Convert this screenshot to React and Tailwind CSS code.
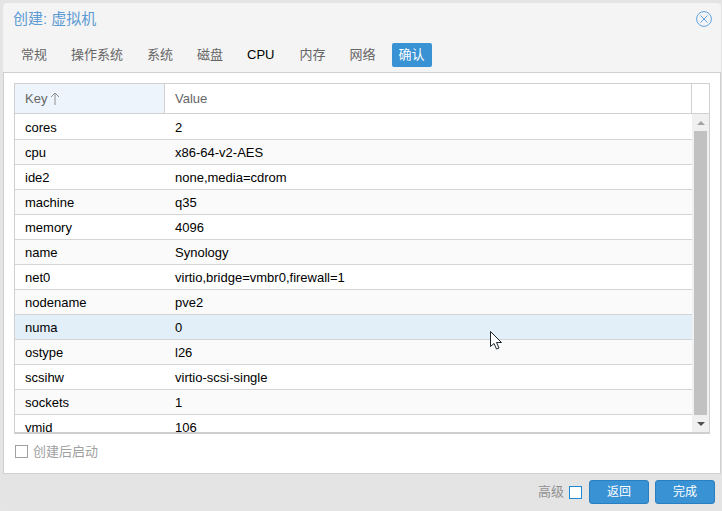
const rows = [
  ["cores", "2"],
  ["cpu", "x86-64-v2-AES"],
  ["ide2", "none,media=cdrom"],
  ["machine", "q35"],
  ["memory", "4096"],
  ["name", "Synology"],
  ["net0", "virtio,bridge=vmbr0,firewall=1"],
  ["nodename", "pve2"],
  ["numa", "0"],
  ["ostype", "l26"],
  ["scsihw", "virtio-scsi-single"],
  ["sockets", "1"],
  ["vmid", "106"],
];

const tabs = ["常规", "操作系统", "系统", "磁盘", "CPU", "内存", "网络"];

const Row = ({ row, index }) => {
  const bg = index === 8 ? "bg-[#e2eef8]" : index % 2 === 1 ? "bg-[#fafafa]" : "bg-white";
  return (
    <div className={`flex h-[25px] shrink-0 border-b border-[#d4d4d4] ${bg}`}>
      <div className="w-[150px] pl-[10px] leading-[26px] text-black">{row[0]}</div>
      <div className="pl-[10px] leading-[26px] text-black">{row[1]}</div>
    </div>
  );
};

const App = () => {
  return (
    <div
      className="relative h-[511px] w-[722px] overflow-hidden bg-[#e4e4e4] pl-[3px] pt-[3px] text-[13px]"
      style={{ fontFamily: '"Liberation Sans", "Noto Sans CJK SC", sans-serif' }}
    >
      <div className="flex h-[507px] w-[718px] flex-col overflow-hidden rounded-[4px] bg-[#f4f4f4]">
        <div className="flex h-[32px] shrink-0 items-center justify-between pl-[10px] pr-[9px]">
          <span className="text-[15px] text-[#5d9bd3]">创建: 虚拟机</span>
          <svg width="16" height="16" viewBox="0 0 16 16" fill="none" stroke="#5fa2dd" strokeWidth="1">
            <circle cx="8" cy="8" r="7.4" />
            <path d="M4.5 4.5l7 7M11.5 4.5l-7 7" />
          </svg>
        </div>
        <div className="flex h-[37px] shrink-0 items-start gap-[4px] pl-[8px] pt-[8px]">
          {tabs.map((t) => (
            <span
              key={t}
              className={`px-[10px] leading-[24px] ${t === "CPU" ? "text-black" : "text-[#666]"} ${t === "内存" ? "ml-[1px]" : ""}`}
            >
              {t}
            </span>
          ))}
          <span className="ml-[2px] h-[24px] rounded-[2px] bg-[#3892d4] px-[7px] leading-[24px] text-white">确认</span>
        </div>
        <div className="flex flex-1 flex-col border border-[#d0d0d0] bg-white pl-[10px] pr-[10px] pt-[10px]">
          <div className="flex h-[351px] shrink-0 flex-col overflow-hidden border-x border-t border-b-2 border-[#d0d0d0] border-b-[#cfcfcf]">
            <div className="flex h-[30px] shrink-0 border-b border-[#d0d0d0] text-[#666]">
              <div className="flex w-[150px] items-center gap-[3px] border-r border-[#d0d0d0] bg-[#edf4fb] pl-[10px]">
                Key
                <svg width="10" height="14" viewBox="0 0 10 14" fill="none" stroke="#919191" strokeWidth="1">
                  <path d="M5 13V1M1 5l4-4 4 4" />
                </svg>
              </div>
              <div className="flex-1 pl-[10px] leading-[29px]">Value</div>
              <div className="w-[18px] border-l border-[#d0d0d0]" />
            </div>
            <div className="flex min-h-0 flex-1">
              <div className="flex min-w-0 flex-1 flex-col overflow-hidden pt-[1px]">
                {rows.map((r, i) => (
                  <Row key={r[0]} row={r} index={i} />
                ))}
              </div>
              <div className="flex w-[17px] shrink-0 flex-col items-center bg-[#f0f0f0]">
                <div className="flex h-[17px] w-full shrink-0 items-center justify-center">
                  <div className="h-0 w-0 border-x-[4px] border-b-[4px] border-x-transparent border-b-[#a3a3a3]" />
                </div>
                <div className="w-[13px] flex-1 bg-[#c1c1c1]" />
                <div className="flex h-[17px] w-full shrink-0 items-center justify-center">
                  <div className="h-0 w-0 border-x-[4px] border-t-[4px] border-x-transparent border-t-[#505050]" />
                </div>
              </div>
            </div>
          </div>
          <div className="mt-[8px] flex items-center gap-[5px] pl-[1px] text-[#a0a0a0]">
            <div className="h-[13px] w-[13px] border border-[#a0a0a0] bg-white" />
            <span>创建后启动</span>
          </div>
        </div>
        <div className="flex h-[36px] shrink-0 items-center justify-end bg-[#e4e4e4] pr-[6px]">
          <span className="text-[#909090]">高级</span>
          <div className="ml-[5px] mr-[7px] h-[13px] w-[13px] border border-[#1e88d8] bg-white" />
          <button className="mr-[6px] h-[24px] w-[60px] rounded-[3px] border border-[#2a7fc1] bg-[#3892d4] text-[12px] text-white">返回</button>
          <button className="h-[24px] w-[60px] rounded-[3px] border border-[#2a7fc1] bg-[#3892d4] text-[12px] text-white">完成</button>
        </div>
      </div>
      <svg className="absolute left-[490px] top-[331px]" width="14" height="20" viewBox="0 0 14 20">
        <path d="M0.5 0.5V15.5L4 12.5L6.5 18L9 17L6.5 11.5H11.5Z" fill="#fff" stroke="#1c2530" strokeWidth="1" />
      </svg>
    </div>
  );
};

export default App;
